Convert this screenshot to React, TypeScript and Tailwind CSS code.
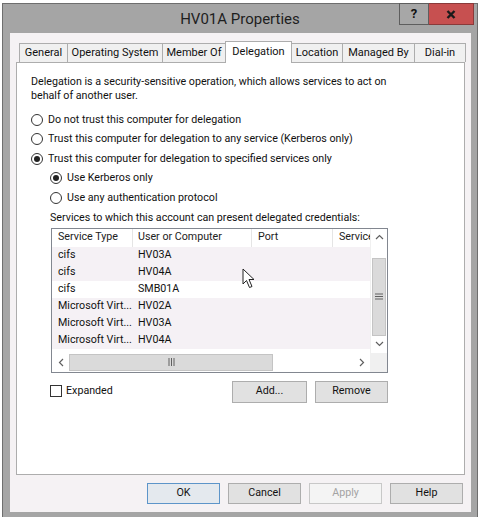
import React from "react";

const font = "font-['Roboto','Liberation_Sans',sans-serif]";

function Radio({ checked, label }: { checked?: boolean; label: string }) {
  return (
    <div className="flex items-center h-[19.5px]">
      <span className="w-[12px] h-[12px] rounded-full border border-[#333] bg-white flex items-center justify-center shrink-0">
        {checked && <span className="w-[6px] h-[6px] rounded-full bg-[#222]" />}
      </span>
      <span className="ml-[5px] whitespace-nowrap">{label}</span>
    </div>
  );
}

function Btn({
  label,
  w,
  h = "h-[21px]",
  variant,
}: {
  label: string;
  w: string;
  h?: string;
  variant?: "default" | "disabled";
}) {
  const cls =
    variant === "default"
      ? "border-[#5d95c9] bg-[#e4e9ee] text-[#111]"
      : variant === "disabled"
      ? "border-[#c8c8c8] bg-[#f4f4f4] text-[#a3a3a3]"
      : "border-[#adadad] bg-[#e1e1e1] text-[#111]";
  return (
    <div className={`${w} ${h} border flex items-center justify-center ${cls}`}>
      {label}
    </div>
  );
}

const rows = [
  ["cifs", "HV03A"],
  ["cifs", "HV04A"],
  ["cifs", "SMB01A"],
  ["Microsoft Virt...", "HV02A"],
  ["Microsoft Virt...", "HV03A"],
  ["Microsoft Virt...", "HV04A"],
];

function ServicesList() {
  return (
    <div className="relative w-[337px] h-[145px] border border-[#828790] bg-white flex flex-col">
      <div className="flex h-[124px]">
        <div className="w-[318px] overflow-hidden">
          <div className="flex h-[18px] items-center text-[#222] whitespace-nowrap">
            <div className="w-[81px] shrink-0 pl-[6px] border-r border-[#e5e5e5] h-full flex items-center">Service Type</div>
            <div className="w-[119px] shrink-0 pl-[5px] border-r border-[#e5e5e5] h-full flex items-center">User or Computer</div>
            <div className="w-[81px] shrink-0 pl-[6px] border-r border-[#e5e5e5] h-full flex items-center">Port</div>
            <div className="w-[60px] shrink-0 pl-[6px] h-full flex items-center">Service</div>
          </div>
          {rows.map(([a, b], i) => (
            <div
              key={i}
              className={`flex h-[17px] items-center whitespace-nowrap ${i === 2 ? "bg-white" : "bg-[#f5f1f5]"}`}
            >
              <div className="w-[81px] shrink-0 pl-[6px]">{a}</div>
              <div className="w-[119px] shrink-0 pl-[5px]">{b}</div>
            </div>
          ))}
        </div>
        <div className="w-[17px] flex flex-col bg-white border-l border-[#f0f0f0]">
          <div className="h-[17px] flex items-center justify-center">
            <svg width="9" height="6" viewBox="0 0 9 6">
              <path d="M1 5 L4.5 1.5 L8 5" fill="none" stroke="#606060" strokeWidth="1.2" />
            </svg>
          </div>
          <div className="h-[12px]" />
          <div className="h-[78px] mx-[1px] bg-[#dadada] border border-[#c4c4c4] flex items-center justify-center">
            <svg width="8" height="7" viewBox="0 0 8 7">
              <path d="M0 1h8M0 3.5h8M0 6h8" stroke="#606060" strokeWidth="1" />
            </svg>
          </div>
          <div className="flex-1 flex items-center justify-center">
            <svg width="9" height="6" viewBox="0 0 9 6">
              <path d="M1 1 L4.5 4.5 L8 1" fill="none" stroke="#606060" strokeWidth="1.2" />
            </svg>
          </div>
        </div>
      </div>
      <div className="flex flex-1">
        <div className="w-[318px] flex items-center bg-white">
          <div className="w-[17px] h-full flex items-center justify-center">
            <svg width="6" height="9" viewBox="0 0 6 9">
              <path d="M5 1 L1.5 4.5 L5 8" fill="none" stroke="#606060" strokeWidth="1.2" />
            </svg>
          </div>
          <div className="w-[204px] h-[17px] bg-[#dadada] border border-[#c4c4c4] flex items-center justify-center">
            <svg width="7" height="8" viewBox="0 0 7 8">
              <path d="M1 0v8M3.5 0v8M6 0v8" stroke="#606060" strokeWidth="1" />
            </svg>
          </div>
          <div className="flex-1" />
          <div className="w-[17px] h-full flex items-center justify-center">
            <svg width="6" height="9" viewBox="0 0 6 9">
              <path d="M1 1 L4.5 4.5 L1 8" fill="none" stroke="#606060" strokeWidth="1.2" />
            </svg>
          </div>
        </div>
        <div className="w-[17px] bg-[#f0f0f0]" />
      </div>
      {/* mouse pointer */}
      <svg
        className="absolute left-[190px] top-[39px]"
        width="14"
        height="21"
        viewBox="0 0 14 21"
      >
        <path
          d="M1 1 L1 16 L4.5 12.5 L7.5 19.5 L10 18.5 L7 11.5 L12 11.5 Z"
          fill="white"
          stroke="#222"
          strokeWidth="1"
          strokeLinejoin="round"
        />
      </svg>
    </div>
  );
}

export default function App() {
  return (
    <div className={`w-[481px] h-[517px] bg-white overflow-hidden text-[10.7px] text-[#111] ${font}`}>
      <div className="ml-[2px] mt-[3px] w-[476px] h-[520px] border border-[#6e6e6e] bg-[#a5a5a5] flex flex-col">
        {/* title bar */}
        <div className="relative h-[29px] flex items-center justify-center">
          <span className="text-[15px] text-[#1e1e1e] mt-[2px]">HV01A Properties</span>
          <div className="absolute right-[3px] top-[-1px] flex">
            <div className="w-[30px] h-[22px] border border-[#5e5e5e] bg-[#a7a7a7] flex items-center justify-center font-bold text-[13px] text-[#111]">
              ?
            </div>
            <div className="w-[45px] h-[22px] bg-[#c75050] border border-[#8a3a3a] border-l-0 flex items-center justify-center">
              <svg width="10" height="9" viewBox="0 0 10 9">
                <path d="M1.5 1 L8.5 8 M8.5 1 L1.5 8" stroke="#1a1a1a" strokeWidth="2.4" />
              </svg>
            </div>
          </div>
        </div>
        {/* client */}
        <div className="ml-[7px] w-[461px] h-[479px] bg-[#f5f2f4] flex flex-col">
          <div className="pl-[6px] pt-[8px]">
            {/* tabs */}
            <div className="flex items-end pl-[3px] h-[21px] relative z-10 whitespace-nowrap text-[11px]">
              {[
                ["General", "w-[49px]"],
                ["Operating System", "w-[96px]"],
                ["Member Of", "w-[64px]"],
                ["Delegation", "w-[67px]"],
                ["Location", "w-[52px]"],
                ["Managed By", "w-[73px]"],
                ["Dial-in", "w-[52px]"],
              ].map(([t, w]) =>
                t === "Delegation" ? (
                  <div
                    key={t}
                    className={`${w} h-[22px] -mb-[1px] -ml-[1px] bg-white border border-b-0 border-[#adadad] flex items-start justify-center pt-[2px]`}
                  >
                    {t}
                  </div>
                ) : (
                  <div
                    key={t}
                    className={`${w} h-[19px] bg-[#f0f0f0] border border-b-0 border-[#adadad] -ml-[1px] first:ml-0 flex items-center justify-center`}
                  >
                    {t}
                  </div>
                )
              )}
            </div>
            {/* panel */}
            <div className="w-[449px] h-[413px] bg-white border border-[#adadad] pl-[14px] pt-[12px] flex flex-col">
              <p className="leading-[14px] w-[370px]">
                Delegation is a security-sensitive operation, which allows services to act on
                behalf of another user.
              </p>
              <div className="mt-[7px] flex flex-col">
                <Radio label="Do not trust this computer for delegation" />
                <Radio label="Trust this computer for delegation to any service (Kerberos only)" />
                <Radio checked label="Trust this computer for delegation to specified services only" />
                <div className="pl-[19px] flex flex-col">
                  <Radio checked label="Use Kerberos only" />
                  <Radio label="Use any authentication protocol" />
                  <div className="mt-[3px] leading-[14px]">
                    Services to which this account can present delegated credentials:
                  </div>
                  <div className="mt-[3px] pl-[1px]">
                    <ServicesList />
                  </div>
                  <div className="mt-[8px] flex items-start">
                    <div className="flex items-center mt-[2px]">
                      <span className="w-[12px] h-[12px] border border-[#333] bg-white" />
                      <span className="ml-[4px]">Expanded</span>
                    </div>
                    <div className="ml-auto mr-[76px] flex gap-[8px]">
                      <Btn label="Add..." w="w-[75px]" h="h-[22px]" />
                      <Btn label="Remove" w="w-[73px]" h="h-[22px]" />
                    </div>
                  </div>
                </div>
              </div>
            </div>
          </div>
          {/* footer */}
          <div className="mt-[8px] flex justify-end gap-[8px] pr-[8px]">
            <Btn label="OK" w="w-[73px]" variant="default" />
            <Btn label="Cancel" w="w-[73px]" />
            <Btn label="Apply" w="w-[73px]" variant="disabled" />
            <Btn label="Help" w="w-[73px]" />
          </div>
        </div>
      </div>
    </div>
  );
}
